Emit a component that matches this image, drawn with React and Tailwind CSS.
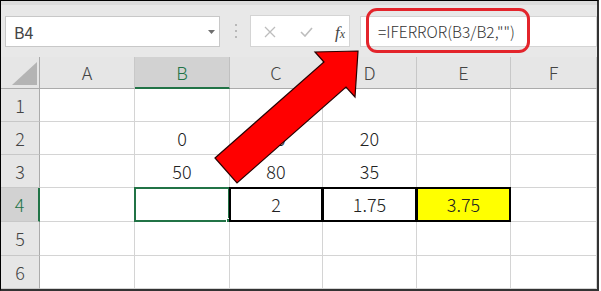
import React from 'react';

const font = { fontFamily: '"Noto Sans CJK JP", "Noto Sans", sans-serif' };

const cols = ['A', 'B', 'C', 'D', 'E', 'F'];

// cell values by row
const rows = [
  { n: 1, h: 'h-[33px]', cells: ['', '', '', '', '', ''] },
  { n: 2, h: 'h-[33px]', cells: ['', '0', '40', '20', '', ''] },
  { n: 3, h: 'h-[33px]', cells: ['', '50', '80', '35', '', ''] },
  { n: 4, h: 'h-[34px]', cells: ['', '', '2', '1.75', '3.75', ''] },
  { n: 5, h: 'h-[34px]', cells: ['', '', '', '', '', ''] },
  { n: 6, h: 'h-[33px]', cells: ['', '', '', '', '', ''] },
];

const FormulaBar = () => (
  <div className="h-[56px] bg-[#e8e8e8] border-t-[4px] border-[#dcdcdc] flex items-start relative">
    {/* name box */}
    <div className="absolute left-[4px] top-[11px] w-[215px] h-[31px] bg-white border border-[#c8c8c8] flex items-center pl-[8px]">
      <span className="text-[16px] text-[#444]">B4</span>
      <svg className="absolute left-[202px] top-[13px]" width="7" height="4" viewBox="0 0 7 4">
        <path d="M0 0 L7 0 L3.5 4 Z" fill="#6e6e6e" />
      </svg>
    </div>
    {/* dots */}
    <div className="absolute left-[234px] top-[19px] flex flex-col gap-[4px]">
      <span className="w-[2px] h-[2px] bg-[#b8b8b8]" />
      <span className="w-[2px] h-[2px] bg-[#b8b8b8]" />
      <span className="w-[2px] h-[2px] bg-[#b8b8b8]" />
    </div>
    {/* cancel / enter / fx */}
    <div className="absolute left-[249px] top-[10px] w-[100px] h-[32px] bg-white border border-[#d4d4d4]">
      <svg className="absolute left-[13px] top-[10px]" width="12" height="12" viewBox="0 0 12 12">
        <path d="M1 1 L11 11 M11 1 L1 11" stroke="#bdbdbd" strokeWidth="1.3" />
      </svg>
      <svg className="absolute left-[49px] top-[11px]" width="13" height="10" viewBox="0 0 13 10">
        <path d="M1 5 L5 9 L12 1" stroke="#bdbdbd" strokeWidth="1.6" fill="none" />
      </svg>
      <span
        className="absolute left-[84px] top-[4px] text-[17px] italic text-[#444]"
        style={{ fontFamily: '"Liberation Serif", serif' }}
      >
        f<span className="text-[12px]">x</span>
      </span>
    </div>
    {/* formula input */}
    <div className="absolute left-[359px] top-[11px] right-0 h-[31px] bg-white border border-[#d4d4d4] flex items-center pl-[17px]">
      <span className="text-[15.5px] font-light text-[#333]">=IFERROR(B3/B2,"")</span>
    </div>
    {/* red highlight */}
    <div className="absolute left-[365px] top-[3px] w-[164px] h-[45px] border-[3px] border-[#e3242b] rounded-[11px]" />
  </div>
);

const HeaderRow = () => (
  <div className="grid grid-cols-[39px_95px_95px_93px_94px_94px_1fr] h-[32px]">
    <div className="bg-[#e6e6e6] border-r border-b border-[#ababab] relative">
      <svg className="absolute left-[11px] top-[5px]" width="25" height="23" viewBox="0 0 25 23">
        <path d="M0 23 L25 23 L25 0 Z" fill="#b4b4b4" />
      </svg>
    </div>
    {cols.map((c) =>
      c === 'B' ? (
        <div
          key={c}
          className="bg-[#d2d2d2] border-r border-[#c0c0c0] border-b-2 border-b-[#217346] flex items-center justify-center text-[18px] font-light text-[#217346]"
        >
          {c}
        </div>
      ) : (
        <div
          key={c}
          className="bg-[#e6e6e6] border-r border-[#c8c8c8] border-b border-b-[#ababab] flex items-center justify-center text-[18px] font-light text-[#444]"
        >
          {c}
        </div>
      )
    )}
  </div>
);

const Cell = ({ value, col, row }) => {
  const selected = row === 4 && col === 1;
  const boxed = row === 4 && col >= 2 && col <= 4;
  const yellow = row === 4 && col === 4;
  return (
    <div
      className={`relative border-r border-b border-[#d4d4d4] flex items-center justify-center text-[18px] font-light text-[#222] ${
        yellow ? 'bg-[#ffff00]' : 'bg-white'
      }`}
    >
      {value}
      {boxed && <span className="absolute -left-[1px] -top-[1px] -right-[1px] -bottom-[1px] border-2 border-black" />}
      {selected && (
        <>
          <span className="absolute -left-[1px] -top-[1px] -right-[1px] -bottom-[1px] border-2 border-[#217346]" />
          <span className="absolute -right-[4px] -bottom-[4px] w-[7px] h-[7px] bg-[#217346] border border-white" />
        </>
      )}
    </div>
  );
};

const Arrow = () => (
  <svg className="absolute left-0 top-0 pointer-events-none" width="601" height="291" viewBox="0 0 601 291">
    <polygon
      points="215,158 324,62 315,52 358,51 355,97 346,87 237,183"
      fill="#ff0000"
      stroke="#2a0000"
      strokeWidth="1.2"
      strokeLinejoin="miter"
    />
  </svg>
);

export default function App() {
  return (
    <div className="relative w-[601px] h-[291px] bg-white" style={font}>
      <div className="w-[599px] h-[291px] border-t border-l border-black border-r-2 border-b-2 border-r-[#333] border-b-[#333] flex flex-col overflow-hidden">
        <FormulaBar />
        <HeaderRow />
        {rows.map((r) => (
          <div key={r.n} className={`grid grid-cols-[39px_95px_95px_93px_94px_94px_1fr] ${r.h}`}>
            {r.n === 4 ? (
              <div className="bg-[#d2d2d2] border-r-2 border-r-[#217346] border-b border-[#c8c8c8] flex items-center justify-center text-[18px] font-light text-[#217346]">
                {r.n}
              </div>
            ) : (
              <div className="bg-[#e6e6e6] border-r border-r-[#ababab] border-b border-[#c8c8c8] flex items-center justify-center text-[18px] font-light text-[#444]">
                {r.n}
              </div>
            )}
            {r.cells.map((v, i) => (
              <Cell key={i} value={v} col={i} row={r.n} />
            ))}
          </div>
        ))}
      </div>
      <Arrow />
    </div>
  );
}
